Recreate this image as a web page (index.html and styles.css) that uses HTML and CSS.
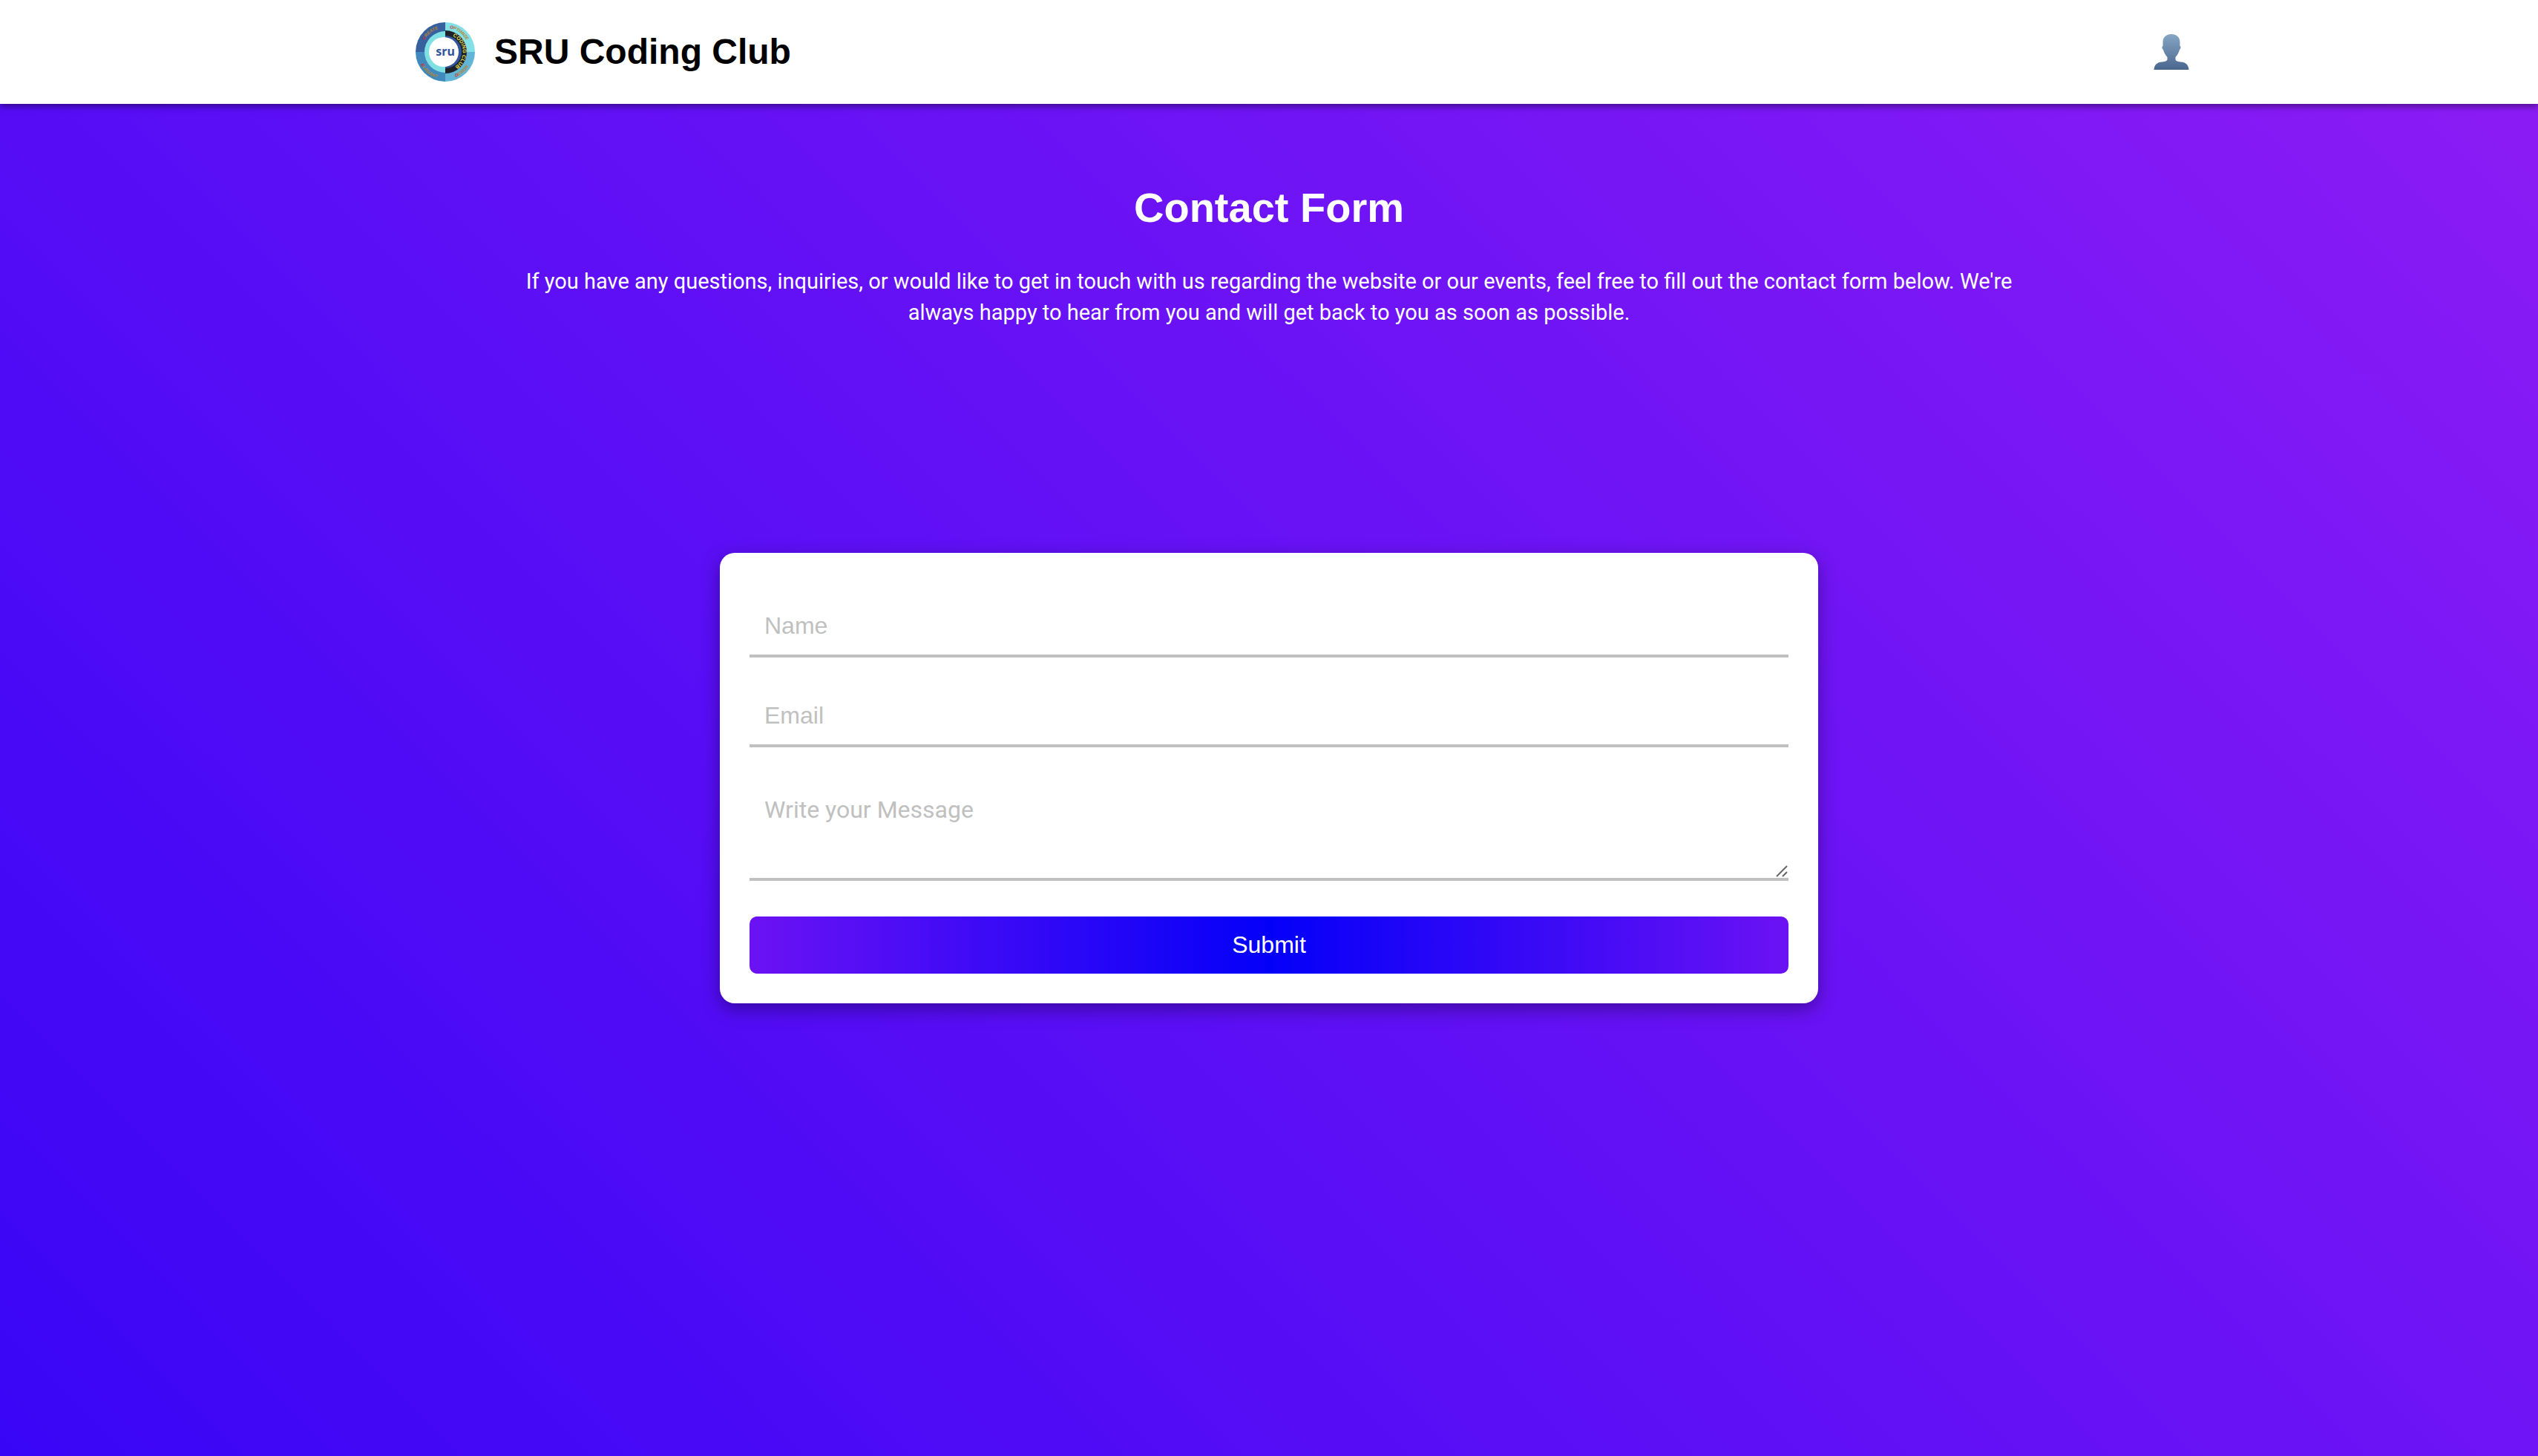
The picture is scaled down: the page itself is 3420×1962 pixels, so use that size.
FILE: index.html
```html
<!DOCTYPE html>
<html lang="en">
<head>
<meta charset="utf-8">
<meta name="viewport" content="width=device-width, initial-scale=1">
<title>SRU Coding Club</title>
<link rel="stylesheet" href="styles.css">
</head>
<body>
<header class="navbar">
  <a class="brand" href="#">
    <svg class="brand-logo" viewBox="0 0 80 80" aria-hidden="true">
      <path d="M40 0A40 40 0 0 0 0 40H40Z" fill="#37609f"/>
      <path d="M40 0A40 40 0 0 1 80 40H40Z" fill="#82e0e6"/>
      <path d="M0 40A40 40 0 0 0 40 80V40Z" fill="#4089bd"/>
      <path d="M80 40A40 40 0 0 1 40 80V40Z" fill="#62b5d6"/>
      <circle cx="40" cy="40" r="28" fill="#7fe0e4"/>
      <path d="M40 11A29 29 0 0 1 40 69Z" fill="#1e2227"/>
      <path d="M40 18A22 22 0 0 1 40 62Z" fill="#31549b"/>
      <circle cx="38" cy="40" r="20" fill="#fff"/>
      <path id="arc-create" d="M12 24A32 32 0 0 1 35 8" fill="none"/>
      <path id="arc-optimize" d="M46 8A32 32 0 0 1 72 36" fill="none"/>
      <path id="arc-club" d="M50 19A23 23 0 0 1 42 63" fill="none"/>
      <path id="arc-elegant" d="M7 57A37 37 0 0 0 38 77" fill="none"/>
      <path id="arc-design" d="M54 74A37 37 0 0 0 77 44" fill="none"/>
      <g class="logo-ring">
        <text><textPath href="#arc-create"><tspan class="logo-initial">C</tspan>REATE</textPath></text>
        <text><textPath href="#arc-optimize"><tspan class="logo-initial">O</tspan>PTIMIZE</textPath></text>
        <text><textPath href="#arc-elegant"><tspan class="logo-initial">E</tspan>LEGANT</textPath></text>
        <text><textPath href="#arc-design"><tspan class="logo-initial">D</tspan>ESIGN</textPath></text>
      </g>
      <text class="logo-club"><textPath href="#arc-club">CODING CLUB</textPath></text>
      <text class="logo-name" x="40" y="45">sru</text>
    </svg>
    <span class="brand-name">SRU Coding Club</span>
  </a>
  <button class="profile" type="button" aria-label="Profile">
    <svg class="profile-icon" viewBox="0 0 48 48" aria-hidden="true">
      <defs><linearGradient id="bust" x1="0" y1="0" x2="0" y2="1"><stop offset="0" stop-color="#86a6c4"/><stop offset="1" stop-color="#4a678e"/></linearGradient></defs>
      <path d="M24 0C17 0 12.500 4 12.500 11C12.500 13 12.700 14.500 12.500 16C11 16 11.200 20 13 21C14 25 16 28 18.500 31V34C18.500 36 16 37 11 37.500C5 38 1 41 .5 48H47.500C47 41 43 38 37 37.500C32 37 29.500 36 29.500 34V31C32 28 34 25 35 21C36.800 20 37 16 35.500 16C35.300 14.500 35.500 13 35.500 11C35.500 4 31 0 24 0Z" fill="url(#bust)"/>
    </svg>
  </button>
</header>
<main class="page">
  <section class="intro">
    <h1 class="title">Contact Form</h1>
    <p class="lead">If you have any questions, inquiries, or would like to get in touch with us regarding the website or our events, feel free to fill out the contact form below. We're always happy to hear from you and will get back to you as soon as possible.</p>
  </section>
  <form class="card">
    <input class="field" type="text" name="name" placeholder="Name" aria-label="Name">
    <input class="field" type="email" name="email" placeholder="Email" aria-label="Email">
    <div class="message">
      <textarea class="field field-message" name="message" placeholder="Write your Message" aria-label="Message"></textarea>
      <svg class="grip" viewBox="0 0 16 16" aria-hidden="true"><path d="M1 15L15 1M9 15L15 9" stroke="#666" stroke-width="2"/></svg>
    </div>
    <button class="submit" type="submit">Submit</button>
  </form>
</main>
</body>
</html>
```

FILE: styles.css
```css
* {
  box-sizing: border-box;
}

body {
  margin: 0;
  min-height: 100vh;
  display: flex;
  flex-direction: column;
  font-family: Roboto, "Liberation Sans", sans-serif;
  background: linear-gradient(45deg, #3905f6, #8d1cf5);
}

.navbar {
  display: flex;
  align-items: center;
  justify-content: space-between;
  height: 140px;
  padding: 0 470px 0 560px;
  background: #fff;
  box-shadow: 0 4px 8px rgba(0, 0, 0, 0.4);
}

.brand {
  display: flex;
  align-items: center;
  gap: 26px;
  color: #000;
  text-decoration: none;
}

.brand-logo {
  width: 80px;
  height: 80px;
}

.brand-name {
  font: bold 48px/56px "Liberation Sans", Arial, sans-serif;
}

.logo-ring {
  font: italic bold 6px "Liberation Sans", sans-serif;
  fill: #b8842f;
}

.logo-initial {
  fill: #d32e2e;
}

.logo-club {
  font: bold 7px "Liberation Sans", sans-serif;
  fill: #e4df55;
}

.logo-name {
  font: bold 16px "Noto Sans", sans-serif;
  fill: #31549b;
  text-anchor: middle;
}

.profile {
  display: flex;
  padding: 0;
  border: 0;
  background: none;
}

.profile-icon {
  width: 48px;
  height: 48px;
}

.page {
  display: flex;
  flex-direction: column;
  align-items: center;
  gap: 303px;
  padding: 108px 20px;
}

.intro {
  width: 60%;
  color: #fff;
  text-align: center;
}

.title {
  margin: 0 0 46px;
  font: bold 56px/64px "Liberation Sans", Arial, sans-serif;
}

.lead {
  margin: 0;
  font-size: 29px;
  line-height: 42px;
}

.card {
  display: flex;
  flex-direction: column;
  width: 100%;
  max-width: 1480px;
  padding: 40px;
  border-radius: 20px;
  background: #fff;
  box-shadow: 0 8px 24px rgba(0, 0, 0, 0.35);
}

.field {
  height: 81px;
  margin: 20px 0;
  padding: 20px;
  border: 0;
  border-bottom: 4px solid #c0c0c0;
  outline: 0;
  background: none;
  font: 32px/37px "Liberation Sans", Arial, sans-serif;
}

.field::placeholder {
  color: #c0c0c0;
  opacity: 1;
}

.message {
  position: relative;
  display: flex;
  margin: 20px 0;
}

.field-message {
  width: 100%;
  height: 140px;
  margin: 0;
  padding-top: 26px;
  resize: none;
  font-family: Roboto, sans-serif;
}

.grip {
  position: absolute;
  right: 1px;
  bottom: 5px;
  width: 16px;
  height: 16px;
}

.submit {
  height: 77px;
  margin-top: 28px;
  border: 0;
  border-radius: 10px;
  background: linear-gradient(90deg, #6b12f4, #0400f8, #6b12f4);
  color: #fff;
  font: 32px/37px "Liberation Sans", Arial, sans-serif;
}
```
